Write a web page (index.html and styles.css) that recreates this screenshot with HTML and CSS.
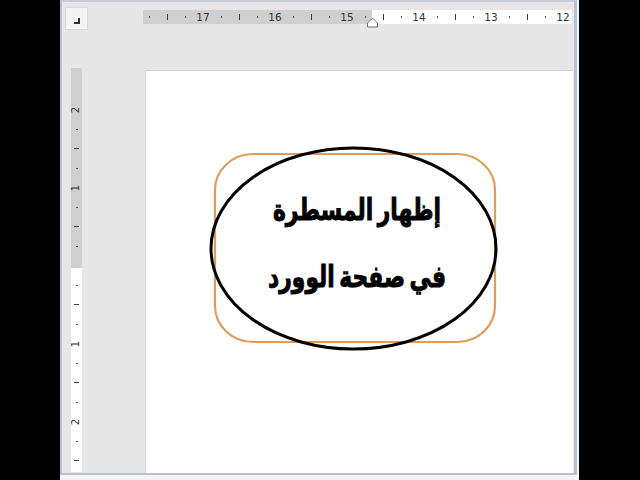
FILE: index.html
```html
<!DOCTYPE html>
<html lang="ar">
<head>
<meta charset="utf-8">
<title>إظهار المسطرة</title>
<link rel="stylesheet" href="styles.css">
</head>
<body>
<div class="screen">
  <div class="frame">
    <div class="window">
      <div class="topbar">
        <div class="tabsel"><span class="tabglyph"></span></div>
        <div class="hruler">
          <div class="hticks">
            <span class="cell"><i class="dot"></i></span><span class="cell"><i class="bar"></i></span><span class="cell"><i class="dot"></i></span><span class="cell num">17</span>
            <span class="cell"><i class="dot"></i></span><span class="cell"><i class="bar"></i></span><span class="cell"><i class="dot"></i></span><span class="cell num">16</span>
            <span class="cell"><i class="dot"></i></span><span class="cell"><i class="bar"></i></span><span class="cell"><i class="dot"></i></span><span class="cell num">15</span>
            <span class="cell"><i class="dot"></i></span><span class="cell"><i class="bar"></i></span><span class="cell"><i class="dot"></i></span><span class="cell num">14</span>
            <span class="cell"><i class="dot"></i></span><span class="cell"><i class="bar"></i></span><span class="cell"><i class="dot"></i></span><span class="cell num">13</span>
            <span class="cell"><i class="dot"></i></span><span class="cell"><i class="bar"></i></span><span class="cell"><i class="dot"></i></span><span class="cell num">12</span>
          </div>
          <svg class="indent" width="13" height="11" viewBox="0 0 13 11"><polygon points="1.5,6 6.5,1 11.5,6 11.5,10 1.5,10" fill="#fff" stroke="#6f6f6f" stroke-width="1"/></svg>
        </div>
      </div>
      <div class="main">
        <div class="vruler">
          <span class="vcell"><b class="vnum">2</b></span>
          <span class="vcell"><i class="vdot"></i></span>
          <span class="vcell"><i class="vbar"></i></span>
          <span class="vcell"><i class="vdot"></i></span>
          <span class="vcell"><b class="vnum">1</b></span>
          <span class="vcell"><i class="vdot"></i></span>
          <span class="vcell"><i class="vbar"></i></span>
          <span class="vcell"><i class="vdot"></i></span>
          <span class="vcell"></span>
          <span class="vcell"><i class="vdot"></i></span>
          <span class="vcell"><i class="vbar"></i></span>
          <span class="vcell"><i class="vdot"></i></span>
          <span class="vcell"><b class="vnum">1</b></span>
          <span class="vcell"><i class="vdot"></i></span>
          <span class="vcell"><i class="vbar"></i></span>
          <span class="vcell"><i class="vdot"></i></span>
          <span class="vcell"><b class="vnum">2</b></span>
          <span class="vcell"><i class="vdot"></i></span>
          <span class="vcell"><i class="vbar"></i></span>
        </div>
        <div class="page">
          <div class="shape">
            <svg class="shape-art" width="300" height="215" viewBox="0 0 300 215">
              <rect x="10" y="12" width="280" height="188" rx="38" ry="36" fill="none" stroke="#e39b5a" stroke-width="2.2"/>
              <ellipse cx="148.5" cy="106.5" rx="142.5" ry="100.5" fill="none" stroke="#000" stroke-width="3"/>
            </svg>
            <p class="title"><span class="line">إظهار المسطرة</span><span class="line">في صفحة الوورد</span></p>
          </div>
        </div>
      </div>
    </div>
  </div>
</div>
</body>
</html>
```

FILE: styles.css
```css
html, body {
  margin: 0;
  padding: 0;
}
body {
  background: #000;
  width: 640px;
  height: 480px;
  overflow: hidden;
  font-family: "DejaVu Sans", "Liberation Sans", sans-serif;
}
.screen {
  display: flex;
  height: 480px;
}
.frame {
  margin-left: 60px;
  width: 519px;
  height: 480px;
  background: #f3f5f8;
}
.window {
  box-sizing: border-box;
  width: 517px;
  height: 475px;
  border-left: 2px solid #b5c2d4;
  border-right: 3px solid #b5c2d4;
  border-top: 2px solid #c6cdd8;
  border-bottom: 2px solid #b5c2d4;
  background: #e7e7e7;
  display: flex;
  flex-direction: column;
}
.topbar {
  height: 66px;
  flex: none;
  display: flex;
  align-items: flex-start;
}
.tabsel {
  box-sizing: border-box;
  margin: 5px 0 0 3px;
  width: 23px;
  height: 23px;
  background: #f4f4f4;
  border: 1px solid #d9d9d9;
  display: flex;
  align-items: center;
  justify-content: center;
}
.tabglyph {
  width: 4px;
  height: 4px;
  margin-top: 4px;
  border-right: 2px solid #2e2e2e;
  border-bottom: 2px solid #2e2e2e;
}
.hruler {
  position: relative;
  margin: 8px 0 0 55px;
  width: 429px;
  height: 14px;
  background: linear-gradient(to right, #cfcfcf 0, #cfcfcf 229px, #fff 229px);
}
.hticks {
  display: flex;
  margin-left: -3px;
  height: 14px;
}
.cell {
  width: 18px;
  flex: none;
  height: 14px;
  display: flex;
  align-items: center;
  justify-content: center;
  font-size: 10.5px;
  color: #333;
  line-height: 14px;
}
.dot {
  width: 1px;
  height: 2px;
  background: #555;
}
.bar {
  width: 1px;
  height: 6px;
  background: #3a3a3a;
}
.indent {
  position: absolute;
  left: 223px;
  top: 7px;
}
.main {
  flex: 1;
  display: flex;
}
.vruler {
  box-sizing: border-box;
  margin-left: 9px;
  width: 11px;
  height: 404px;
  padding-top: 32px;
  background: linear-gradient(to bottom, #cfcfcf 0, #cfcfcf 200px, #fff 200px);
  display: flex;
  flex-direction: column;
}
.vcell {
  height: 19.5px;
  flex: none;
  display: flex;
  align-items: center;
  justify-content: center;
}
.vdot {
  width: 2px;
  height: 1px;
  background: #555;
}
.vbar {
  width: 5px;
  height: 1px;
  background: #3a3a3a;
}
.vnum {
  font-weight: normal;
  font-size: 10px;
  color: #333;
  transform: rotate(-90deg);
  line-height: 10px;
}
.page {
  box-sizing: border-box;
  margin: 2px 0 0 63px;
  width: 428px;
  height: 403px;
  background: #fff;
  border-top: 1px solid #d2d4d8;
  border-left: 1px solid #d2d4d8;
}
.shape {
  position: relative;
  margin: 71px 0 0 59px;
  width: 300px;
  height: 215px;
}
.shape-art {
  position: absolute;
  left: 0;
  top: 0;
}
.title {
  position: relative;
  margin: 0;
  padding: 34px 0 0 4px;
  direction: rtl;
  text-align: center;
  font-family: "DejaVu Sans", sans-serif;
  font-weight: bold;
  font-size: 28px;
  line-height: 67px;
  color: #000;
  -webkit-text-stroke: 0.9px #000;
  word-spacing: -4px;
  display: flex;
  flex-direction: column;
}
.line {
  display: block;
  transform: scale(0.78, 1.06);
}
```
